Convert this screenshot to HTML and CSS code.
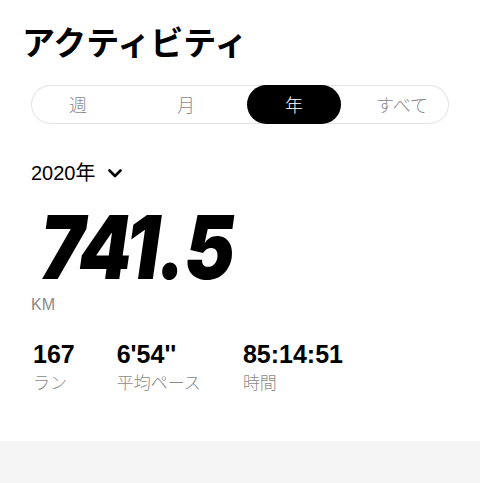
FILE: index.html
```html
<!DOCTYPE html>
<html lang="ja">

<head>
  <meta charset="UTF-8" />
  <title>アクティビティ</title>
  <link rel="stylesheet" href="styles.css">
</head>

<body>
  <div class="page">
    <h1 class="title">アクティビティ</h1>

    <div class="tabs">
      <div class="tab">週</div>
      <div class="tab">月</div>
      <div class="tab active">年</div>
      <div class="tab">すべて</div>
    </div>

    <div class="year">
      <span>2020年</span>
      <svg class="chevron" width="14" height="9" viewBox="0 0 14 9">
        <path d="M1.5 1.5 L7 7 L12.5 1.5" fill="none" stroke="#000" stroke-width="2.6" stroke-linecap="round" stroke-linejoin="round" />
      </svg>
    </div>

    <div class="total">
      <div class="total-num">741.5</div>
      <div class="total-unit">KM</div>
    </div>

    <div class="stats">
      <div class="stat">
        <div class="stat-val">167</div>
        <div class="stat-label">ラン</div>
      </div>
      <div class="stat">
        <div class="stat-val">6'54''</div>
        <div class="stat-label">平均ペース</div>
      </div>
      <div class="stat">
        <div class="stat-val">85:14:51</div>
        <div class="stat-label">時間</div>
      </div>
    </div>
  </div>

  <div class="footer"></div>
</body>

</html>
```

FILE: styles.css
```css
body {
  margin: 0;
  background: #fff;
  color: #000;
  font-family: "Liberation Sans", "Noto Sans CJK JP", sans-serif;
}

.page {
  height: 441px;
  padding: 0 31px;
  box-sizing: border-box;
  overflow: hidden;
}

.title {
  margin: 20px 0 0 -9px;
  font-size: 33px;
  line-height: 42px;
  font-weight: 700;
  font-family: "Noto Sans CJK JP", sans-serif;
}

.tabs {
  margin-top: 23px;
  height: 39px;
  border-radius: 20px;
  box-shadow: inset 0 0 0 1px #e4e4e4;
  display: flex;
  justify-content: space-between;
}

.tab {
  width: 94px;
  height: 39px;
  line-height: 39px;
  border-radius: 20px;
  text-align: center;
  font-size: 18px;
  color: #8a8a8a;
  font-family: "Noto Sans CJK JP", sans-serif;
  font-weight: 300;
}

.tab.active {
  background: #000;
  color: #fff;
}

.year {
  margin-top: 37px;
  display: flex;
  align-items: center;
  font-size: 20px;
  line-height: 24px;
}

.chevron {
  margin-left: 12px;
  margin-top: 1px;
}

.total {
  margin-top: 18px;
}

.total-num {
  font-family: Inter, sans-serif;
  font-weight: 900;
  font-style: italic;
  font-size: 88px;
  line-height: 88px;
  letter-spacing: -2px;
  transform: scaleX(0.855);
  transform-origin: left center;
  margin-left: 9px;
}

.total-unit {
  margin-top: 4px;
  font-size: 16px;
  line-height: 20px;
  color: #8a8a8a;
}

.stats {
  margin-top: 24px;
  display: flex;
  gap: 42px;
  padding-left: 2px;
}

.stat-val {
  font-size: 25px;
  line-height: 30px;
  font-weight: 700;
}

.stat-label {
  margin-top: 2px;
  font-size: 17px;
  line-height: 22px;
  color: #8a8a8a;
  font-family: "Noto Sans CJK JP", sans-serif;
  font-weight: 300;
}

.footer {
  height: 42px;
  background: #f5f5f5;
}
```
